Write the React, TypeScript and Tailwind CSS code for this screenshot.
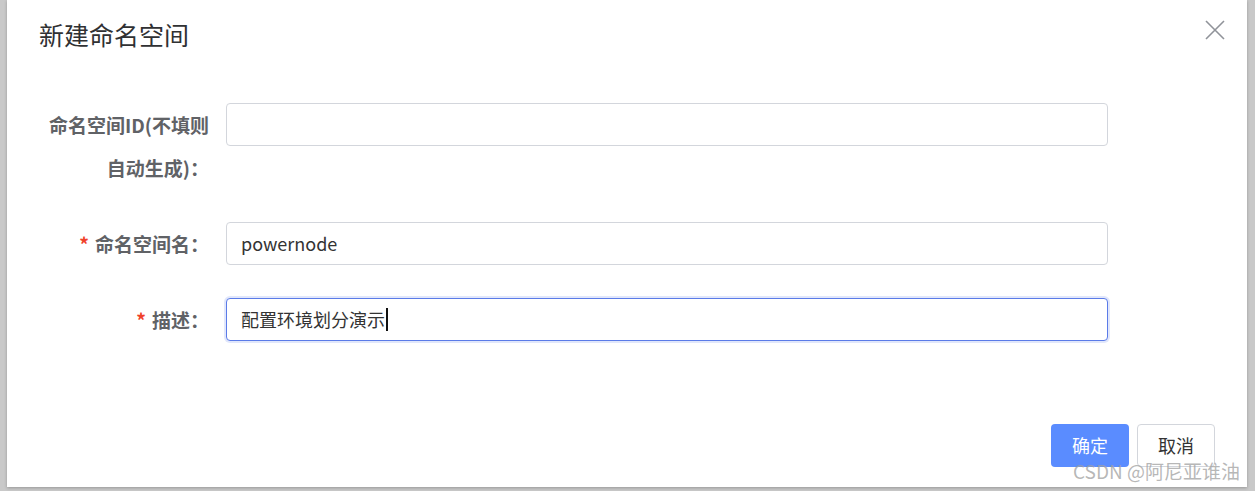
const font = { fontFamily: '"Microsoft YaHei", "Noto Sans CJK SC", "Noto Sans", sans-serif' };

function Label({ required, children }: { required?: boolean; children: React.ReactNode }) {
  return (
    <div className="w-[187px] shrink-0 pr-[17px] text-right text-[19px] leading-[43px] font-bold text-[#606266]">
      {required && <span className="mr-[6px] text-[#f0412a]">*</span>}
      {children}
    </div>
  );
}

function Field({ value, focused }: { value?: string; focused?: boolean }) {
  return (
    <div
      className={`flex h-[43px] w-[882px] items-center rounded-[4px] border bg-white px-[14px] text-[18px] text-[#333] ${
        focused ? "border-[#5b7be8] shadow-[0_0_0_2px_rgba(91,123,232,0.18)]" : "border-[#d3d6dc]"
      }`}
    >
      <span>{value}</span>
      {focused && <span className="ml-[1px] h-[23px] w-[2px] bg-[#111]" />}
    </div>
  );
}

export default function App() {
  return (
    <div className="h-[491px] w-[1255px] bg-[#c9c9c9] pb-[4px] pl-[7px] pr-[8px]" style={font}>
      <div className="relative flex h-[487px] flex-col bg-white shadow-[0_1px_3px_rgba(0,0,0,0.25)]">
        {/* Header */}
        <div className="flex items-start justify-between pl-[32px] pr-[22px] pt-[21px]">
          <h2 className="mt-[-3px] text-[25px] leading-[32px] text-[#303133]">新建命名空间</h2>
          <button className="mt-[-1px] text-[#909399]" aria-label="close">
            <svg width="20" height="20" viewBox="0 0 20 20" fill="none" stroke="currentColor" strokeWidth="1.6">
              <path d="M1 1 L19 19 M19 1 L1 19" />
            </svg>
          </button>
        </div>

        {/* Form */}
        <div className="mt-[53px] flex flex-col gap-[33px] pl-[32px]">
          <div className="flex items-start">
            <Label>
              命名空间ID(不填则
              <br />
              自动生成)：
            </Label>
            <Field />
          </div>
          <div className="flex items-start">
            <Label required>命名空间名：</Label>
            <Field value="powernode" />
          </div>
          <div className="flex items-start">
            <Label required>描述：</Label>
            <Field value="配置环境划分演示" focused />
          </div>
        </div>

        {/* Footer */}
        <div className="mt-auto mb-[20px] flex justify-end gap-[8px] pr-[32px]">
          <button className="h-[43px] w-[78px] rounded-[4px] bg-[#5a8cff] text-[18px] text-white">确定</button>
          <button className="h-[43px] w-[78px] rounded-[4px] border border-[#d3d6dc] bg-white text-[18px] text-[#333]">
            取消
          </button>
        </div>

        <div className="pointer-events-none absolute bottom-[5px] right-[7px] text-[19px] leading-[22px] text-[#a0a0a0]/75">
          CSDN @阿尼亚谁油
        </div>
      </div>
    </div>
  );
}
